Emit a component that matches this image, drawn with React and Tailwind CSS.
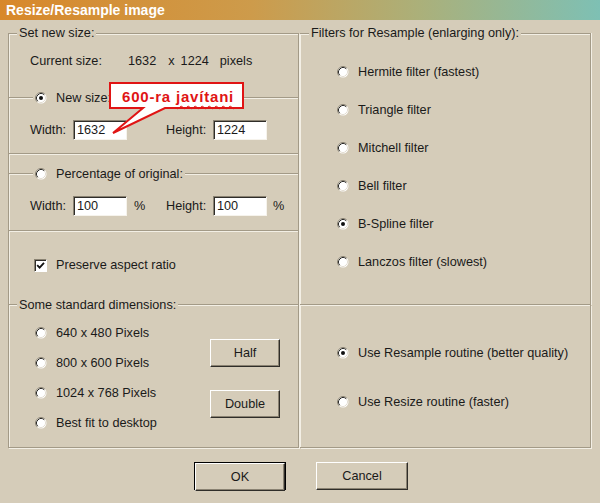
import React from 'react';

// classic win32 radio bullet
function Radio({ checked }) {
  return (
    <svg width="12" height="12" viewBox="0 0 12 12" className="shrink-0">
      <circle cx="6" cy="6" r="5.5" fill="#fff" />
      <path d="M2.11 9.89 A5.5 5.5 0 0 1 9.89 2.11" fill="none" stroke="#8a8272" />
      <path d="M2.82 9.18 A4.5 4.5 0 0 1 9.18 2.82" fill="none" stroke="#2b2a27" />
      <path d="M9.18 2.82 A4.5 4.5 0 0 1 2.82 9.18" fill="none" stroke="#e4ded2" />
      {checked && <circle cx="6" cy="6" r="2" fill="#111" />}
    </svg>
  );
}

function Etch({ className = '' }) {
  return <div className={`h-[2px] border-t border-[#a39a87] bg-[#f3efe5] ${className}`} />;
}

function Field({ value }) {
  return (
    <div className="w-[54px] h-[20px] bg-white border-t border-l border-t-[#8a8272] border-l-[#8a8272] border-b border-r border-b-[#f6f3ec] border-r-[#f6f3ec] shadow-[inset_1px_1px_0_#2f2d29] pl-[3px] flex items-center">
      {value}
    </div>
  );
}

function Btn({ children, className = '' }) {
  return (
    <div className={`h-[28px] flex items-center justify-center bg-[#d5ccb9] border-t border-l border-t-white border-l-white border-b border-r border-b-[#2f2d29] border-r-[#2f2d29] shadow-[inset_-1px_-1px_0_#8a8272] ${className}`}>
      {children}
    </div>
  );
}

function SizeRow({ w, h, pct }) {
  return (
    <div className="mt-[15px] h-[20px] flex items-center pl-[21px]">
      <span className="w-[43px]">Width:</span>
      <Field value={w} />
      <span className="w-[39px] pl-[7px]">{pct ? '%' : ''}</span>
      <span className="w-[47px]">Height:</span>
      <Field value={h} />
      {pct && <span className="pl-[6px]">%</span>}
    </div>
  );
}

function OptionRow({ label, checked }) {
  return (
    <div className="h-[14px] flex items-center">
      <Radio checked={checked} />
      <span className="ml-[9px] whitespace-nowrap">{label}</span>
    </div>
  );
}

const filters = [
  ['Hermite filter (fastest)', false],
  ['Triangle filter', false],
  ['Mitchell filter', false],
  ['Bell filter', false],
  ['B-Spline filter', true],
  ['Lanczos filter (slowest)', false],
];

const dims = ['640 x 480 Pixels', '800 x 600 Pixels', '1024 x 768 Pixels', 'Best fit to desktop'];

export default function App() {
  return (
    <div className="relative w-[600px] h-[503px] overflow-hidden bg-[#d5ccb9] text-[#1a1a1a] text-[12.7px] leading-[14px] font-[Liberation_Sans,Arial,sans-serif]">
      <div className="h-[20px] pl-[6px] flex items-center text-white font-bold text-[14px] bg-[linear-gradient(90deg,#d8882a_0%,#cd9b4b_42%,#abb07a_70%,#7ec0b4_100%)]">
        Resize/Resample image
      </div>

      <div className="flex mt-[13px] pl-[8px]">
        {/* left: size settings */}
        <div className="w-[291px] h-[415px] flex flex-col border border-[#a39a87] shadow-[inset_1px_1px_0_#f3efe5,1px_1px_0_#f3efe5]">
          <div className="-mt-[8px] ml-[8px] px-[2px] h-[14px] self-start bg-[#d5ccb9]">Set new size:</div>

          <div className="mt-[14px] h-[14px] flex pl-[21px] whitespace-nowrap">
            <span className="w-[98px]">Current size:</span>
            <span>1632</span>
            <span className="ml-[12px]">x</span>
            <span className="ml-[6px]">1224</span>
            <span className="ml-[11px]">pixels</span>
          </div>

          <div className="mt-[23px] h-[14px] flex items-center">
            <Etch className="w-[24px]" />
            <div className="ml-[2px]"><Radio checked /></div>
            <span className="ml-[9px]">New size:</span>
            <Etch className="ml-[2px] flex-1" />
          </div>
          <SizeRow w="1632" h="1224" />

          <Etch className="mt-[13px]" />
          <div className="mt-[12px] h-[14px] flex items-center">
            <Etch className="w-[24px]" />
            <div className="ml-[2px]"><Radio /></div>
            <span className="ml-[9px] whitespace-nowrap">Percentage of original:</span>
            <Etch className="ml-[2px] flex-1" />
          </div>
          <SizeRow w="100" h="100" pct />

          <Etch className="mt-[14px]" />
          <div className="mt-[26px] h-[14px] flex items-center pl-[25px]">
            <div className="w-[13px] h-[13px] bg-white border-t border-l border-t-[#8a8272] border-l-[#8a8272] border-b border-r border-b-white border-r-white shadow-[inset_1px_1px_0_#2f2d29] flex items-center justify-center">
              <svg width="9" height="9" viewBox="0 0 9 9">
                <path d="M1.2 4.2 L3.6 6.6 L8 1.8" fill="none" stroke="#111" strokeWidth="1.8" />
              </svg>
            </div>
            <span className="ml-[9px]">Preserve aspect ratio</span>
          </div>

          <div className="mt-[26px] h-[14px] flex items-center">
            <Etch className="w-[8px]" />
            <span className="ml-[2px] whitespace-nowrap">Some standard dimensions:</span>
            <Etch className="ml-[2px] flex-1" />
          </div>
          <div className="flex">
            <div className="w-[201px] pl-[26px] mt-[14px] flex flex-col gap-[16px]">
              {dims.map(d => <OptionRow key={d} label={d} />)}
            </div>
            <div className="mt-[27px] flex flex-col gap-[23px]">
              <Btn className="w-[70px]">Half</Btn>
              <Btn className="w-[70px]">Double</Btn>
            </div>
          </div>
        </div>

        {/* right: filters + routine */}
        <div className="ml-[1px] w-[291px] flex flex-col">
          <div className="h-[272px] flex flex-col border-t border-r border-b border-[#a39a87] shadow-[inset_1px_1px_0_#f3efe5,1px_0_0_#f3efe5]">
            <div className="-mt-[8px] ml-[9px] px-[2px] h-[14px] self-start bg-[#d5ccb9] whitespace-nowrap">Filters for Resample (enlarging only):</div>
            <div className="mt-[25px] pl-[37px] flex flex-col gap-[24px]">
              {filters.map(([f, c]) => <OptionRow key={f} label={f} checked={c} />)}
            </div>
          </div>
          <div className="h-[143px] pt-[41px] pl-[37px] flex flex-col gap-[35px] border-r border-b border-[#a39a87] shadow-[inset_1px_1px_0_#f3efe5,1px_1px_0_#f3efe5]">
            <OptionRow label="Use Resample routine (better quality)" checked />
            <OptionRow label="Use Resize routine (faster)" />
          </div>
        </div>
      </div>

      <div className="mt-[14px] pl-[2px] flex justify-center gap-[30px]">
        <div className="w-[92px] h-[28px] border border-black">
          <Btn className="h-[26px]">OK</Btn>
        </div>
        <Btn className="w-[92px]">Cancel</Btn>
      </div>

      {/* annotation callout drawn over the dialog */}
      <div className="absolute left-[108px] top-[81px] w-[140px] h-[56px]">
        <svg width="140" height="56" viewBox="0 0 140 56" className="absolute inset-0">
          <path d="M2 2 H135 V27 H57 L5 52 L35 27 H2 Z" fill="#fff" stroke="#e01414" strokeWidth="2" strokeLinejoin="miter" />
        </svg>
        <div className="absolute left-[14px] top-[7px] text-[15px] leading-[17px] font-bold tracking-[0.8px] text-[#e01414] whitespace-nowrap">
          600-ra <span className="underline decoration-wavy decoration-[#e01414] decoration-1 underline-offset-[3px]">javítani</span>
        </div>
      </div>
    </div>
  );
}
